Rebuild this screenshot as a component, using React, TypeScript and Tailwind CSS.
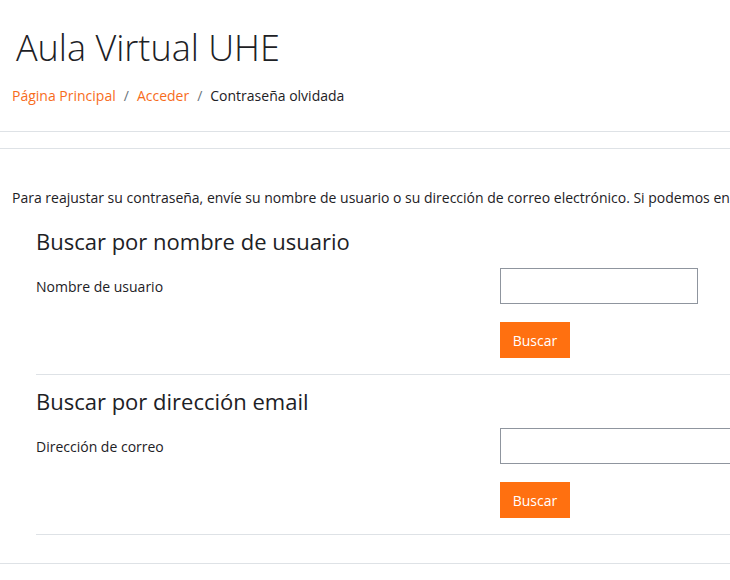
import React from "react";

const font = { fontFamily: '"Open Sans", "Noto Sans", sans-serif' };

const SearchSection = ({
  title,
  label,
  inputWide,
}: {
  title: string;
  label: string;
  inputWide?: boolean;
}) => {
  return (
    <div className="border-b border-[#dee2e6]">
      <h3 className="text-[22px] leading-[28px] text-[#1d2125] pt-[1px]">{title}</h3>
      <div className="flex flex-row mt-[13px]">
        <label className="w-[464px] shrink-0 text-[14px] text-[#1d2125] pt-[8px]">{label}</label>
        <div className="flex flex-col shrink-0">
          <input
            className={`h-[36px] border border-[#8f959e] ${inputWide ? "w-[260px]" : "w-[198px]"}`}
            type="text"
          />
          <button className="mt-[18px] mb-[16px] w-[70px] h-[36px] bg-[#ff7010] text-white text-[14px]">
            Buscar
          </button>
        </div>
      </div>
    </div>
  );
};

const App = () => {
  return (
    <div className="w-[730px] h-[580px] overflow-hidden bg-white" style={font}>
      <header className="pt-[26px] px-[12px] border-b border-[#dee2e6] pb-[25px]">
        <h1 className="text-[36px] leading-[44px] font-light text-[#1d2125] pl-[4px]">
          Aula Virtual UHE
        </h1>
        <nav className="mt-[15px] flex flex-row items-center text-[14px] gap-[8px] whitespace-nowrap">
          <span className="text-[#f76c1c]">Página Principal</span>
          <span className="text-[#6a737b]">/</span>
          <span className="text-[#f76c1c]">Acceder</span>
          <span className="text-[#6a737b]">/</span>
          <span className="text-[#1d2125]">Contraseña olvidada</span>
        </nav>
      </header>
      <div className="mt-[16px] border-t border-[#dee2e6] overflow-hidden">
        <p className="mt-[38px] ml-[12px] text-[14px] text-[#1d2125] whitespace-nowrap">
          Para reajustar su contraseña, envíe su nombre de usuario o su dirección de correo electrónico. Si podemos encontrarle en la base de datos, le enviaremos un email con instrucciones para poder acceder de nuevo.
        </p>
        <div className="ml-[36px] mt-[18px]">
          <SearchSection title="Buscar por nombre de usuario" label="Nombre de usuario" />
          <div className="pt-[11px]">
            <SearchSection title="Buscar por dirección email" label="Dirección de correo" inputWide />
          </div>
        </div>
        <div className="mt-[28px] border-t border-[#dee2e6]" />
      </div>
    </div>
  );
};

export default App;
